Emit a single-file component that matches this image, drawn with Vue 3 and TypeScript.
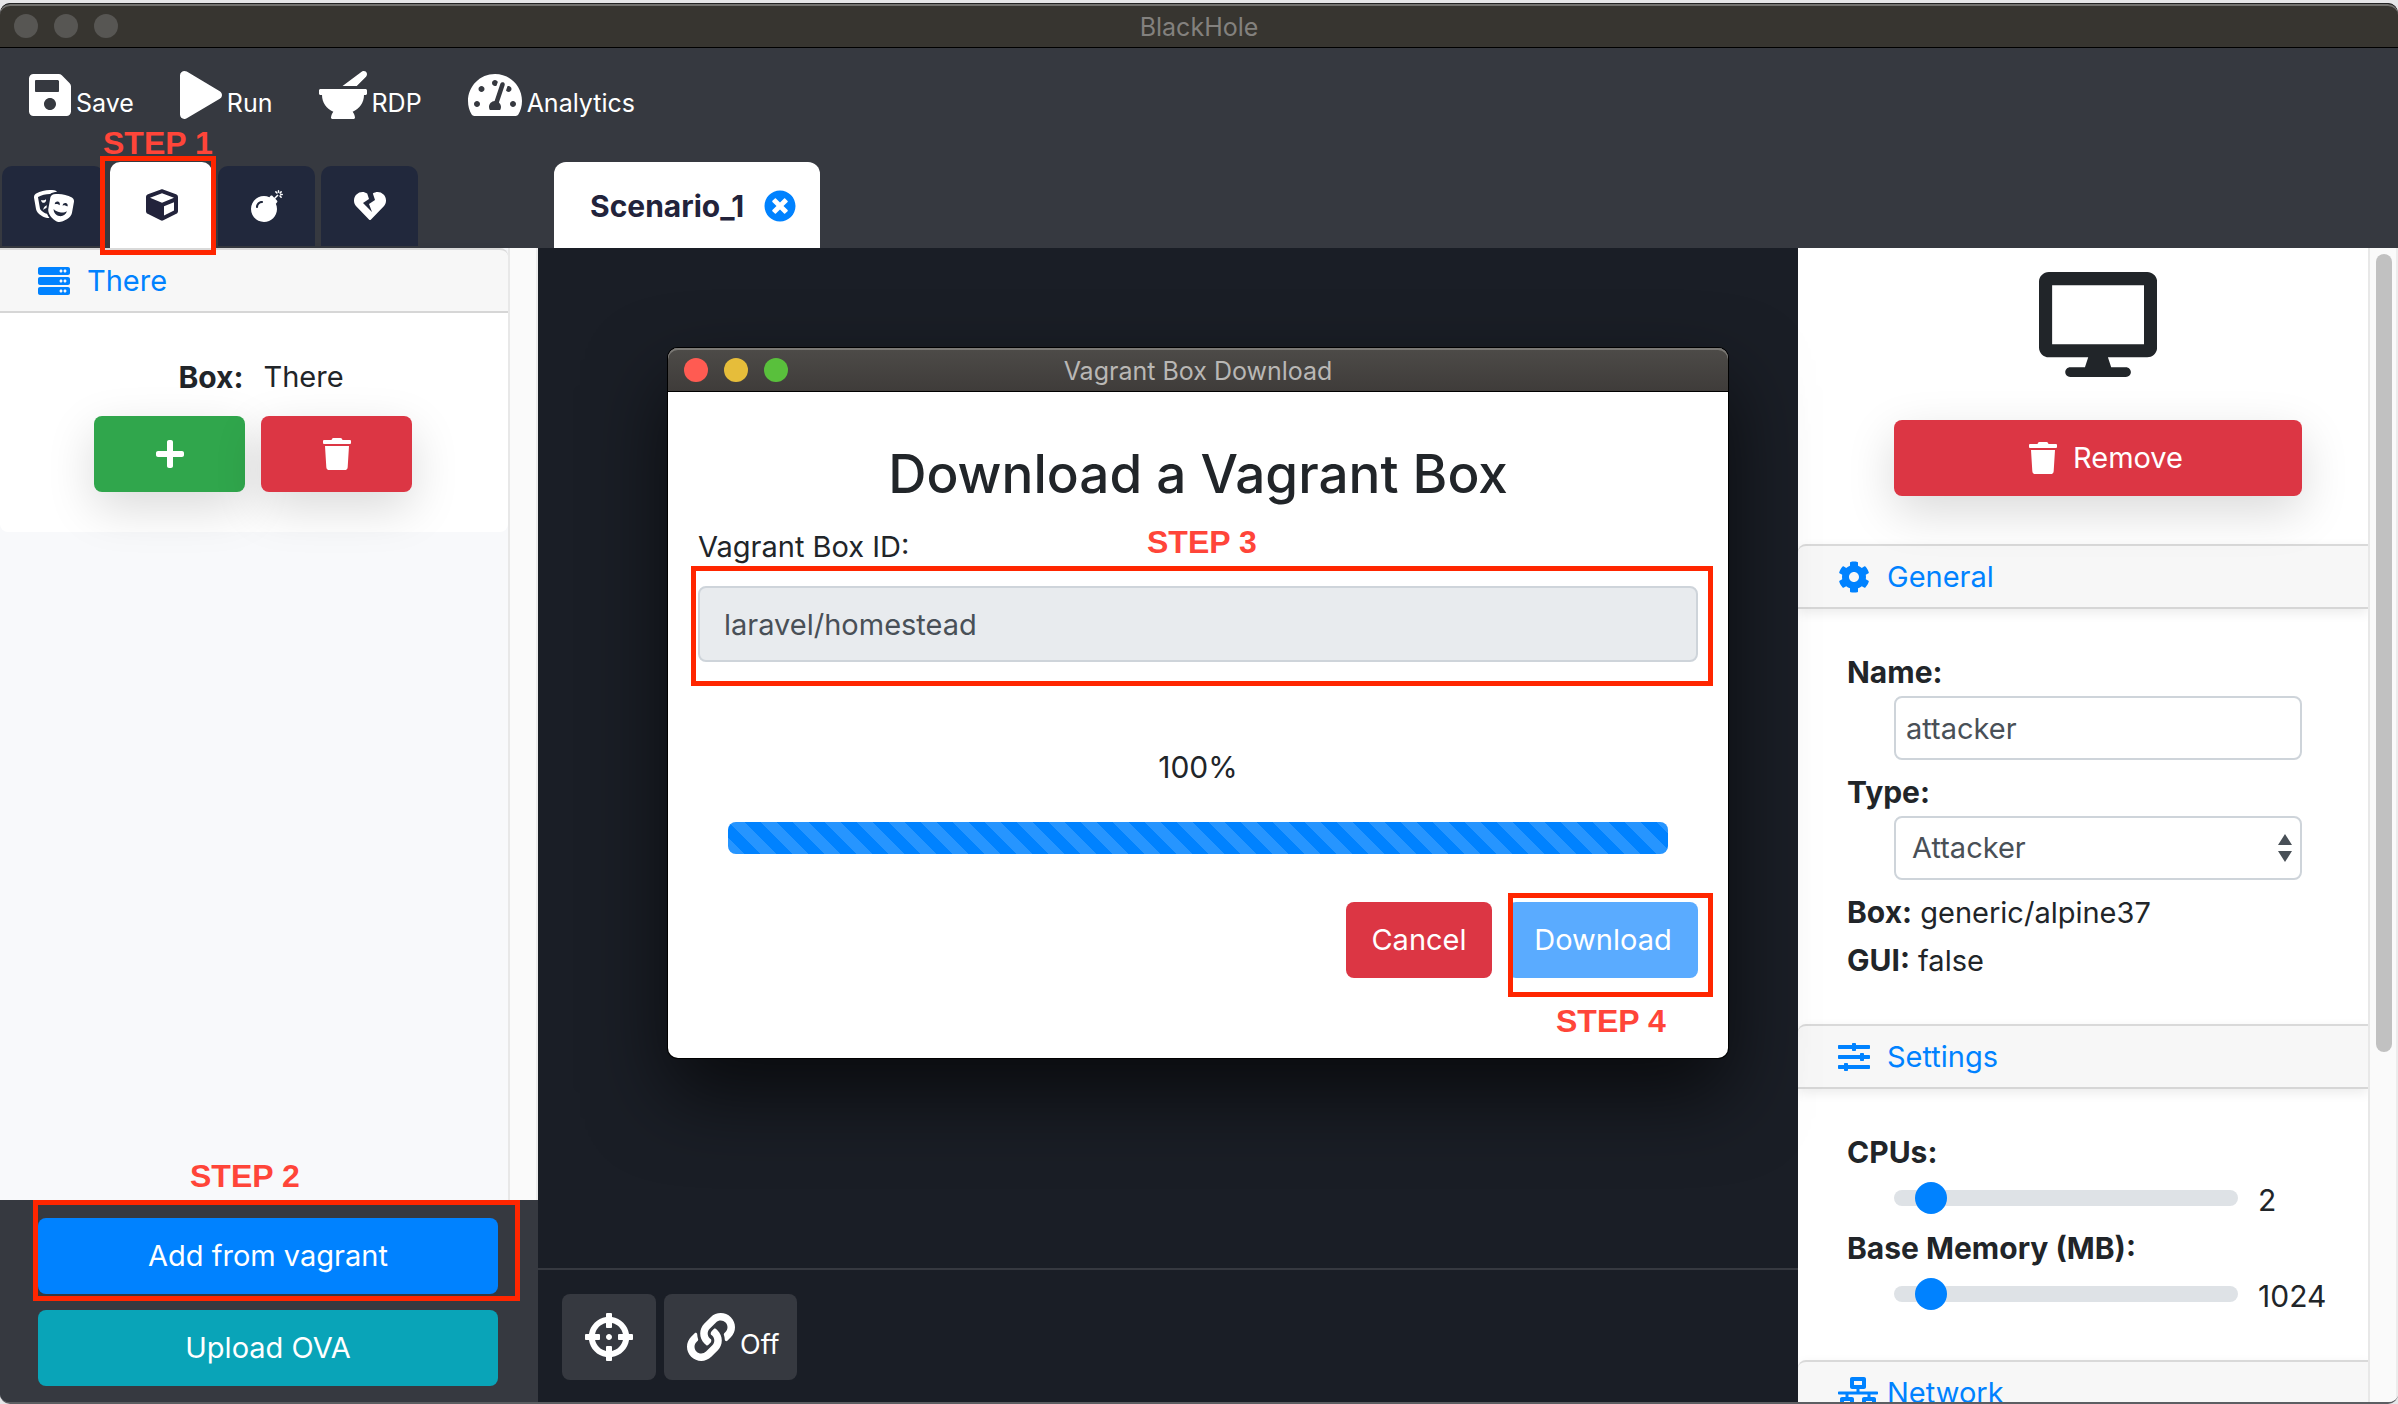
<script setup lang="ts">
import { ref } from 'vue'

interface Icon {
  w: number
  d: string
}

const icons: Record<string, Icon> = {
  save: { w: 448, d: 'M433.941 129.941l-83.882-83.882A48 48 0 0 0 316.118 32H48C21.49 32 0 53.49 0 80v352c0 26.51 21.49 48 48 48h352c26.51 0 48-21.49 48-48V163.882a48 48 0 0 0-14.059-33.941zM224 416c-35.346 0-64-28.654-64-64 0-35.346 28.654-64 64-64s64 28.654 64 64c0 35.346-28.654 64-64 64zm96-304.52V212c0 6.627-5.373 12-12 12H76c-6.627 0-12-5.373-12-12V108c0-6.627 5.373-12 12-12h228.52c3.183 0 6.235 1.264 8.485 3.515l3.48 3.48A11.996 11.996 0 0 1 320 111.48z' },
  play: { w: 448, d: 'M424.4 214.7L72.4 6.6C43.8-10.3 0 6.1 0 47.9V464c0 37.5 40.7 60.1 72.4 41.3l352-208c31.4-18.5 31.5-64.1 0-82.6z' },
  mortar: { w: 512, d: 'M501.54 60.91c17.22-17.22 12.51-46.25-9.27-57.14a35.696 35.696 0 0 0-37.37 3.37L251.09 160h151.37l99.08-99.09zM496 192H16c-8.84 0-16 7.16-16 16v32c0 8.84 7.16 16 16 16h16c0 80.98 50.2 150.11 121.13 178.32-12.76 16.87-21.72 36.8-24.95 58.69-1.46 9.92 6.04 18.98 16.07 18.98h223.5c10.03 0 17.53-9.06 16.07-18.98-3.22-21.89-12.18-41.82-24.95-58.69C429.8 406.11 480 336.98 480 256h16c8.84 0 16-7.16 16-16v-32c0-8.84-7.16-16-16-16z' },
  gauge: { w: 576, d: 'M288 32C128.94 32 0 160.94 0 320c0 52.8 14.25 102.26 39.06 144.8 5.61 9.62 16.3 15.2 27.44 15.2h443c11.14 0 21.83-5.58 27.44-15.2C561.75 422.26 576 372.8 576 320c0-159.06-128.94-288-288-288zm0 64c14.71 0 26.58 10.13 30.32 23.65-1.11 2.26-2.64 4.23-3.45 6.67l-9.22 27.67c-5.13 3.49-10.97 6.01-17.64 6.01-17.67 0-32-14.33-32-32S270.33 96 288 96zM96 384c-17.67 0-32-14.33-32-32s14.33-32 32-32 32 14.33 32 32-14.33 32-32 32zm48-160c-17.67 0-32-14.33-32-32s14.33-32 32-32 32 14.33 32 32-14.33 32-32 32zm246.77-72.41l-61.33 184C343.13 347.33 352 364.54 352 384c0 11.72-3.38 22.55-8.88 32H232.88c-5.5-9.45-8.88-20.28-8.88-32 0-33.94 26.5-61.43 59.9-63.59l61.34-184.01c4.17-12.56 17.73-19.45 30.36-15.17 12.57 4.19 19.35 17.79 15.17 30.36zm14.66 57.2l15.52-46.55c3.47-1.29 7.13-2.23 11.05-2.23 17.67 0 32 14.33 32 32s-14.33 32-32 32c-11.38-.01-20.89-6.28-26.57-15.22zM480 384c-17.67 0-32-14.33-32-32s14.33-32 32-32 32 14.33 32 32-14.33 32-32 32z' },
  masks: { w: 640, d: 'M206.86 245.15c-35.88 10.45-59.95 41.2-57.53 74.1 11.4-12.72 28.81-23.7 49.9-30.92l7.63-43.18zM95.81 295L64.08 115.49c-.29-1.62.28-2.62.24-2.65 57.76-32.06 123.12-49.01 189.01-49.01 1.61 0 3.23.17 4.85.19 13.95-13.47 31.73-22.83 51.59-26 18.89-3.02 38.05-4.55 57.18-5.32-9.99-13.95-24.48-24.23-41.77-27C301.27 1.89 277.24 0 253.32 0 176.66 0 101.02 19.42 33.2 57.06 9.03 70.48-3.92 98.48 1.05 126.58l31.73 179.51c14.23 80.52 136.33 142.08 204.45 142.08 3.59 0 6.75-.46 10.01-.8-13.52-17.08-28.94-40.48-39.5-67.58-47.61-12.98-106.06-51.62-111.93-84.79zm97.55-137.46c-.73-4.12-2.23-7.87-4.07-11.4-8.25 8.91-20.67 15.75-35.32 18.32-14.65 2.58-28.67.4-39.48-5.17-.52 3.94-.64 7.98.09 12.1 3.84 21.7 24.58 36.19 46.34 32.37 21.75-3.82 36.28-24.52 32.44-46.22zM606.8 120.9c-88.98-49.38-191.43-67.41-291.98-51.35-27.31 4.36-49.08 26.26-54.04 54.36l-31.73 179.51c-15.39 87.05 95.28 196.27 158.31 207.35 63.03 11.09 204.47-53.79 219.86-140.84l31.73-179.51c4.97-28.11-7.98-56.11-32.15-69.52zm-273.24 96.8c3.84-21.7 24.58-36.19 46.34-32.36 21.76 3.83 36.28 24.52 32.45 46.22-.73 4.12-2.23 7.87-4.07 11.4-8.25-8.91-20.67-15.75-35.32-18.32-14.65-2.58-28.67-.4-39.48 5.17-.53-3.95-.65-7.99.08-12.11zm70.47 198.76c-55.68-9.79-93.52-59.27-89.04-112.9 20.6 25.54 56.21 46.17 99.49 53.78 43.28 7.61 83.82.37 111.93-16.6-14.18 51.94-66.71 85.51-122.38 75.72zm130.3-151.34c-8.25-8.91-20.68-15.75-35.33-18.32-14.65-2.58-28.67-.4-39.48 5.17-.52-3.94-.64-7.98.09-12.1 3.84-21.7 24.58-36.19 46.34-32.37 21.75 3.83 36.28 24.52 32.45 46.22-.73 4.13-2.23 7.88-4.07 11.4z' },
  cube: { w: 512, d: 'M239.1 6.3l-208 78c-18.7 7-31.1 25-31.1 45v225.1c0 18.2 10.3 34.8 26.5 42.9l208 104c13.5 6.8 29.4 6.8 42.9 0l208-104c16.3-8.1 26.5-24.8 26.5-42.9V129.3c0-20-12.4-37.9-31.1-44.9l-208-78C262 2.2 250 2.2 239.1 6.3zM256 68.4l192 72v1.1l-192 78-192-78v-1.1l192-72zm32 356V275.5l160-65v133.9l-160 80z' },
  bomb: { w: 512, d: 'M440.5 88.5l-52 52L415 167c9.4 9.4 9.4 24.6 0 33.9l-17.4 17.4c11.8 26.1 18.4 55.1 18.4 85.6 0 114.9-93.1 208-208 208S0 418.9 0 304 93.1 96 208 96c30.5 0 59.5 6.6 85.6 18.4L311 97c9.4-9.4 24.6-9.4 33.9 0l26.5 26.5 52-52 17.1 17zM500 60h-24c-6.6 0-12 5.4-12 12s5.4 12 12 12h24c6.6 0 12-5.4 12-12s-5.4-12-12-12zM440 0c-6.6 0-12 5.4-12 12v24c0 6.6 5.4 12 12 12s12-5.4 12-12V12c0-6.6-5.4-12-12-12zm33.9 55l17-17c4.7-4.7 4.7-12.3 0-17-4.7-4.7-12.3-4.7-17 0l-17 17c-4.7 4.7-4.7 12.3 0 17 4.8 4.7 12.4 4.7 17 0zm-67.8 0c4.7 4.7 12.3 4.7 17 0 4.7-4.7 4.7-12.3 0-17l-17-17c-4.7-4.7-12.3-4.7-17 0-4.7 4.7-4.7 12.3 0 17l17 17zm67.8 34c-4.7-4.7-12.3-4.7-17 0-4.7 4.7-4.7 12.3 0 17l17 17c4.7 4.7 12.3 4.7 17 0 4.7-4.7 4.7-12.3 0-17l-17-17zM112 272c0-35.3 28.7-64 64-64 8.8 0 16-7.2 16-16s-7.2-16-16-16c-52.9 0-96 43.1-96 96 0 8.8 7.2 16 16 16s16-7.2 16-16z' },
  heart: { w: 512, d: 'M473.7 73.8l-2.4-2.5c-46-47-118-51.7-169.6-14.8L336 159.9l-96 64 48 128-144-144 96-64-28.6-86.5C159.7 19.6 87 24 40.7 71.4l-2.4 2.4C-10.4 123.6-12.5 202.9 31 256l212.1 218.6c7.1 7.3 18.6 7.3 25.7 0L481 255.9c43.5-53 41.4-132.3-7.3-182.1z' },
  close: { w: 512, d: 'M256 8C119 8 8 119 8 256s111 248 248 248 248-111 248-248S393 8 256 8zm121.6 313.1c4.7 4.7 4.7 12.3 0 17L338 377.6c-4.7 4.7-12.3 4.7-17 0L256 312l-65.1 65.6c-4.7 4.7-12.3 4.7-17 0L134.4 338c-4.7-4.7-4.7-12.3 0-17l65.6-65-65.6-65.1c-4.7-4.7-4.7-12.3 0-17l39.6-39.6c4.7-4.7 12.3-4.7 17 0l65 65.7 65.1-65.6c4.7-4.7 12.3-4.7 17 0l39.6 39.6c4.7 4.7 4.7 12.3 0 17L312 256l65.6 65.1z' },
  server: { w: 512, d: [0, 160, 320].map((y) => `M480 ${160 + y}H32c-17.673 0-32-14.327-32-32v-64c0-17.673 14.327-32 32-32h448c17.673 0 32 14.327 32 32v64c0 17.673-14.327 32-32 32zm-48-88c-13.255 0-24 10.745-24 24s10.745 24 24 24 24-10.745 24-24-10.745-24-24-24zm-64 0c-13.255 0-24 10.745-24 24s10.745 24 24 24 24-10.745 24-24-10.745-24-24-24z`).join('') },
  plus: { w: 448, d: 'M416 208H272V64c0-17.67-14.33-32-32-32h-32c-17.67 0-32 14.33-32 32v144H32c-17.67 0-32 14.33-32 32v32c0 17.67 14.33 32 32 32h144v144c0 17.67 14.33 32 32 32h32c17.67 0 32-14.33 32-32V304h144c17.67 0 32-14.33 32-32v-32c0-17.67-14.33-32-32-32z' },
  trash: { w: 448, d: 'M432 32H312l-9.4-18.7A24 24 0 0 0 281.1 0H166.8a23.72 23.72 0 0 0-21.4 13.3L136 32H16A16 16 0 0 0 0 48v32a16 16 0 0 0 16 16h416a16 16 0 0 0 16-16V48a16 16 0 0 0-16-16zM53.2 467a48 48 0 0 0 47.9 45h245.8a48 48 0 0 0 47.9-45L416 128H32z' },
  desktop: { w: 576, d: 'M528 0H48C21.5 0 0 21.5 0 48v320c0 26.5 21.5 48 48 48h192l-16 48h-72c-13.3 0-24 10.7-24 24s10.7 24 24 24h272c13.3 0 24-10.7 24-24s-10.7-24-24-24h-72l-16-48h192c26.5 0 48-21.5 48-48V48c0-26.5-21.5-48-48-48zm-16 352H64V64h448v288z' },
  cog: { w: 512, d: 'M487.4 315.7l-42.6-24.6c4.3-23.2 4.3-47 0-70.2l42.6-24.6c4.9-2.8 7.1-8.6 5.5-14-11.1-35.6-30-67.8-54.7-94.6-3.8-4.1-10-5.1-14.8-2.3L380.8 110c-17.9-15.4-38.5-27.3-60.8-35.1V25.8c0-5.6-3.9-10.5-9.4-11.7-36.7-8.2-74.3-7.8-109.2 0-5.5 1.2-9.4 6.1-9.4 11.7V75c-22.2 7.9-42.8 19.8-60.8 35.1L88.7 85.5c-4.9-2.8-11-1.9-14.8 2.3-24.7 26.7-43.6 58.9-54.7 94.6-1.7 5.4.6 11.2 5.5 14L67.3 221c-4.3 23.2-4.3 47 0 70.2l-42.6 24.6c-4.9 2.8-7.1 8.6-5.5 14 11.1 35.6 30 67.8 54.7 94.6 3.8 4.1 10 5.1 14.8 2.3l42.6-24.6c17.9 15.4 38.5 27.3 60.8 35.1v49.2c0 5.6 3.9 10.5 9.4 11.7 36.7 8.2 74.3 7.8 109.2 0 5.5-1.2 9.4-6.1 9.4-11.7v-49.2c22.2-7.9 42.8-19.8 60.8-35.1l42.6 24.6c4.9 2.8 11 1.9 14.8-2.3 24.7-26.7 43.6-58.9 54.7-94.6 1.5-5.5-.7-11.3-5.6-14.1zM256 336c-44.1 0-80-35.9-80-80s35.9-80 80-80 80 35.9 80 80-35.9 80-80 80z' },
  sliders: { w: 512, d: 'M496 384H160v-16c0-8.8-7.2-16-16-16h-32c-8.8 0-16 7.2-16 16v16H16c-8.8 0-16 7.2-16 16v32c0 8.8 7.2 16 16 16h80v16c0 8.8 7.2 16 16 16h32c8.8 0 16-7.2 16-16v-16h336c8.8 0 16-7.2 16-16v-32c0-8.8-7.2-16-16-16zm0-160h-80v-16c0-8.8-7.2-16-16-16h-32c-8.8 0-16 7.2-16 16v16H16c-8.8 0-16 7.2-16 16v32c0 8.8 7.2 16 16 16h336v16c0 8.8 7.2 16 16 16h32c8.8 0 16-7.2 16-16v-16h80c8.8 0 16-7.2 16-16v-32c0-8.8-7.2-16-16-16zm0-160H288V48c0-8.8-7.2-16-16-16h-32c-8.8 0-16 7.2-16 16v16H16C7.2 64 0 71.2 0 80v32c0 8.8 7.2 16 16 16h208v16c0 8.8 7.2 16 16 16h32c8.8 0 16-7.2 16-16v-16h208c8.8 0 16-7.2 16-16V80c0-8.8-7.2-16-16-16z' },
  network: { w: 640, d: 'M640 264v-16c0-8.84-7.16-16-16-16H344v-40h72c17.67 0 32-14.33 32-32V32c0-17.67-14.33-32-32-32H224c-17.67 0-32 14.33-32 32v128c0 17.67 14.33 32 32 32h72v40H16c-8.84 0-16 7.16-16 16v16c0 8.84 7.16 16 16 16h104v40H64c-17.67 0-32 14.33-32 32v128c0 17.67 14.33 32 32 32h160c17.67 0 32-14.33 32-32V352c0-17.67-14.33-32-32-32h-56v-40h304v40h-56c-17.67 0-32 14.33-32 32v128c0 17.67 14.33 32 32 32h160c17.67 0 32-14.33 32-32V352c0-17.67-14.33-32-32-32h-56v-40h104c8.84 0 16-7.16 16-16zM256 128V64h128v64H256zm-64 320H96v-64h96v64zm352 0h-96v-64h96v64z' },
  crosshairs: { w: 512, d: 'M500 224h-30.364C455.724 130.325 381.675 56.276 288 42.364V12c0-6.627-5.373-12-12-12h-40c-6.627 0-12 5.373-12 12v30.364C130.325 56.276 56.276 130.325 42.364 224H12c-6.627 0-12 5.373-12 12v40c0 6.627 5.373 12 12 12h30.364C56.276 381.675 130.325 455.724 224 469.636V500c0 6.627 5.373 12 12 12h40c6.627 0 12-5.373 12-12v-30.364C381.675 455.724 455.724 381.675 469.636 288H500c6.627 0 12-5.373 12-12v-40c0-6.627-5.373-12-12-12zM288 404.634V364c0-6.627-5.373-12-12-12h-40c-6.627 0-12 5.373-12 12v40.634C165.826 392.232 119.783 346.243 107.366 288H148c6.627 0 12-5.373 12-12v-40c0-6.627-5.373-12-12-12h-40.634C119.768 165.826 165.757 119.783 224 107.366V148c0 6.627 5.373 12 12 12h40c6.627 0 12-5.373 12-12v-40.634C346.174 119.768 392.217 165.757 404.634 224H364c-6.627 0-12 5.373-12 12v40c0 6.627 5.373 12 12 12h40.634C392.232 346.174 346.243 392.217 288 404.634zM288 256c0 17.673-14.327 32-32 32s-32-14.327-32-32c0-17.673 14.327-32 32-32s32 14.327 32 32z' },
  link: { w: 512, d: 'M326.612 185.391c59.747 59.809 58.927 155.698.36 214.59-.11.12-.24.25-.36.37l-67.2 67.2c-59.27 59.27-155.699 59.262-214.96 0-59.27-59.26-59.27-155.7 0-214.96l37.106-37.106c9.84-9.84 26.786-3.3 27.294 10.606.648 17.722 3.826 35.527 9.69 52.721 1.986 5.822.567 12.262-3.783 16.612l-13.087 13.087c-28.026 28.026-28.905 73.66-1.155 101.96 28.024 28.579 74.086 28.749 102.325.51l67.2-67.19c28.191-28.191 28.073-73.757 0-101.83-3.701-3.694-7.429-6.564-10.341-8.569a16.037 16.037 0 0 1-6.947-12.606c-.396-10.567 3.348-21.456 11.698-29.806l21.054-21.055c5.521-5.521 14.182-6.199 20.584-1.731a152.482 152.482 0 0 1 20.522 17.197zM467.547 44.449c-59.261-59.262-155.69-59.27-214.96 0l-67.2 67.2c-.12.12-.25.25-.36.37-58.566 58.892-59.387 154.781.36 214.59a152.454 152.454 0 0 0 20.521 17.196c6.402 4.468 15.064 3.789 20.584-1.731l21.054-21.055c8.35-8.35 12.094-19.239 11.698-29.806a16.037 16.037 0 0 0-6.947-12.606c-2.912-2.005-6.64-4.875-10.341-8.569-28.073-28.073-28.191-73.639 0-101.83l67.2-67.19c28.239-28.239 74.3-28.069 102.325.51 27.75 28.3 26.872 73.934-1.155 101.96l-13.087 13.087c-4.35 4.35-5.769 10.79-3.783 16.612 5.864 17.194 9.042 34.999 9.69 52.721.509 13.906 17.454 20.446 27.294 10.606l37.106-37.106c59.271-59.259 59.271-155.699.001-214.959z' },
}

const box = (name: string): string => `0 0 ${icons[name].w} 512`

const tools = [
  { icon: 'save', label: 'Save' },
  { icon: 'play', label: 'Run' },
  { icon: 'mortar', label: 'RDP' },
  { icon: 'gauge', label: 'Analytics' },
]

const libraryTabs = [
  { icon: 'masks', label: 'Roles' },
  { icon: 'cube', label: 'Boxes' },
  { icon: 'bomb', label: 'Attacks' },
  { icon: 'heart', label: 'Vulnerabilities' },
]
const activeTab = ref('cube')

const machineName = ref('attacker')
const machineType = ref('Attacker')
const cpus = ref(2)
const memory = ref(1024)
const boxId = ref('laravel/homestead')
const progress = ref(100)
</script>

<template>
  <div class="screen">
    <div class="window">
      <div class="titlebar main-bar">
        <div class="lights idle"><i></i><i></i><i></i></div>
        <span>BlackHole</span>
      </div>

      <header class="header">
        <nav class="toolbar">
          <button v-for="t in tools" :key="t.icon" type="button" class="tool">
            <svg class="i48" :viewBox="box(t.icon)"><path :d="icons[t.icon].d" /></svg>
            <span>{{ t.label }}</span>
          </button>
        </nav>
        <div class="tab-row">
          <div class="library-tabs">
            <button
              v-for="t in libraryTabs"
              :key="t.icon"
              type="button"
              class="tab"
              :class="[t.icon, { active: activeTab === t.icon }]"
              :aria-label="t.label"
              @click="activeTab = t.icon"
            >
              <svg class="i32" :viewBox="box(t.icon)"><path :d="icons[t.icon].d" /></svg>
              <span v-if="t.icon === 'cube'" class="mark mark-1"><b>STEP 1</b></span>
            </button>
          </div>
          <div class="scenario">
            <span>Scenario_1</span>
            <button type="button" class="close" aria-label="Close scenario">
              <svg class="i32" :viewBox="box('close')"><path :d="icons.close.d" /></svg>
            </button>
          </div>
        </div>
      </header>

      <main class="workspace">
        <aside class="library">
          <div class="library-scroll">
            <div class="library-list">
              <h2 class="section-head">
                <svg class="i32" :viewBox="box('server')"><path :d="icons.server.d" /></svg>
                <a href="#">There</a>
              </h2>
              <div class="box-card">
                <p class="box-line"><strong>Box:</strong><span>There</span></p>
                <div class="box-actions">
                  <button type="button" class="btn green raised" aria-label="Add box">
                    <svg class="i32" :viewBox="box('plus')"><path :d="icons.plus.d" /></svg>
                  </button>
                  <button type="button" class="btn red raised" aria-label="Delete box">
                    <svg class="i32" :viewBox="box('trash')"><path :d="icons.trash.d" /></svg>
                  </button>
                </div>
              </div>
            </div>
            <div class="gutter"></div>
          </div>
          <div class="library-foot">
            <button type="button" class="btn blue">
              Add from vagrant
              <span class="mark mark-2"><b>STEP 2</b></span>
            </button>
            <button type="button" class="btn teal">Upload OVA</button>
          </div>
        </aside>

        <section class="canvas">
          <div class="stage"></div>
          <div class="canvas-bar">
            <button type="button" class="canvas-btn" aria-label="Center view">
              <svg class="i48" :viewBox="box('crosshairs')"><path :d="icons.crosshairs.d" /></svg>
            </button>
            <button type="button" class="canvas-btn">
              <svg class="i48" :viewBox="box('link')"><path :d="icons.link.d" /></svg>
              <span>Off</span>
            </button>
          </div>
        </section>

        <aside class="details">
          <div class="details-list">
            <div class="machine">
              <svg class="desktop" :viewBox="box('desktop')"><path :d="icons.desktop.d" /></svg>
              <button type="button" class="btn red raised">
                <svg class="i32" :viewBox="box('trash')"><path :d="icons.trash.d" /></svg>
                Remove
              </button>
            </div>

            <h2 class="section-head">
              <svg class="i32" :viewBox="box('cog')"><path :d="icons.cog.d" /></svg>
              <a href="#">General</a>
            </h2>
            <div class="section-body">
              <label for="name">Name:</label>
              <input id="name" v-model="machineName" class="field" type="text" />
              <label for="type">Type:</label>
              <div class="select-wrap">
                <select id="type" v-model="machineType" class="field">
                  <option>Attacker</option>
                  <option>Victim</option>
                </select>
                <svg class="arrows" viewBox="0 0 14 28"><path d="M7 0l7 11H0zM7 28l7-11H0z" /></svg>
              </div>
              <p><strong>Box:</strong> generic/alpine37</p>
              <p><strong>GUI:</strong> false</p>
            </div>

            <h2 class="section-head">
              <svg class="i32" :viewBox="box('sliders')"><path :d="icons.sliders.d" /></svg>
              <a href="#">Settings</a>
            </h2>
            <div class="section-body">
              <label for="cpus">CPUs:</label>
              <div class="range-row">
                <input id="cpus" v-model.number="cpus" type="range" min="1" max="16" />
                <output for="cpus">{{ cpus }}</output>
              </div>
              <label for="memory">Base Memory (MB):</label>
              <div class="range-row">
                <input id="memory" v-model.number="memory" type="range" min="512" max="8192" step="512" />
                <output for="memory">{{ memory }}</output>
              </div>
            </div>

            <h2 class="section-head">
              <svg class="i32" :viewBox="box('network')"><path :d="icons.network.d" /></svg>
              <a href="#">Network</a>
            </h2>
          </div>
          <div class="scrollbar"><div class="thumb"></div></div>
        </aside>
      </main>
    </div>

    <div class="dialog" role="dialog" aria-labelledby="dialog-title">
      <div class="titlebar dialog-bar">
        <div class="lights"><i></i><i></i><i></i></div>
        <span>Vagrant Box Download</span>
      </div>
      <div class="dialog-body">
        <h1 id="dialog-title">Download a Vagrant Box</h1>
        <label for="box-id">Vagrant Box ID:</label>
        <div class="box-field">
          <input id="box-id" v-model="boxId" type="text" disabled />
          <span class="mark mark-3"><b>STEP 3</b></span>
        </div>
        <p class="percent">{{ progress }}%</p>
        <div class="track"><div class="bar" :style="{ width: progress + '%' }"></div></div>
        <div class="dialog-actions">
          <button type="button" class="btn red">Cancel</button>
          <button type="button" class="btn pale">
            Download
            <span class="mark mark-4"><b>STEP 4</b></span>
          </button>
        </div>
      </div>
    </div>
  </div>
</template>

<style>
body {
  margin: 0;
  background: #e6e6e8;
  overflow: hidden;
}
</style>

<style scoped>
* {
  box-sizing: border-box;
}

.screen {
  --left: 538px;
  --right: 600px;
  --ink: #212529;
  --slate: #363940;
  --night: #1a1e26;
  --blue: #0082ff;
  position: relative;
  height: 100vh;
  padding-top: 3px;
  font: 400 29px/48px Inter, "Liberation Sans", sans-serif;
  color: var(--ink);
}

button,
input,
select {
  font: inherit;
  color: inherit;
}

button {
  border: 0;
  padding: 0;
  background: none;
}

h1,
h2,
p {
  margin: 0;
  font-weight: 400;
}

svg {
  display: block;
  flex: none;
  fill: currentColor;
}

.i48 {
  height: 48px;
}

.i32 {
  height: 32px;
}

strong,
.section-body label {
  font-size: 30px;
  font-weight: 700;
}

.window {
  display: flex;
  flex-direction: column;
  height: 100%;
  border-radius: 10px;
  overflow: hidden;
  background: var(--slate);
  border-bottom: 2px solid #5c5e62;
}

/* Title bars */
.titlebar {
  position: relative;
  flex: none;
  display: flex;
  align-items: center;
  justify-content: center;
  font-size: 25px;
  border-bottom: 1px solid #000;
}

.titlebar span {
  padding-top: 2px;
}

.main-bar {
  height: 45px;
  color: #83817e;
  background: #373530;
  border-top: 1px solid #222;
  border-radius: 10px 10px 0 0;
  box-shadow: inset 0 2px #73726f;
}

.lights {
  position: absolute;
  left: 16px;
  display: flex;
  gap: 16px;
}

.main-bar .lights {
  left: 14px;
}

.lights i {
  width: 24px;
  height: 24px;
  border-radius: 50%;
  background: #ff5b52;
}

.lights i:nth-child(2) {
  background: #e6bd3a;
}

.lights i:nth-child(3) {
  background: #59c03c;
}

.lights.idle i {
  background: #575653;
}

/* Header */
.header {
  flex: none;
  height: 200px;
  display: flex;
  flex-direction: column;
  justify-content: space-between;
  color: #fff;
}

.toolbar {
  display: flex;
  gap: 46px;
  padding: 23px 29px 0;
  font-size: 25px;
  line-height: 32px;
}

.tool {
  display: flex;
  align-items: flex-end;
  gap: 5px;
  line-height: inherit;
}

.tab-row {
  display: flex;
  align-items: flex-end;
}

.library-tabs {
  width: var(--left);
  display: flex;
  align-items: flex-end;
  gap: 6px;
  padding-left: 2px;
}

.tab {
  position: relative;
  display: flex;
  align-items: center;
  justify-content: center;
  width: 97px;
  height: 80px;
  margin-bottom: 2px;
  border-radius: 10px 10px 0 0;
  background: #21283c;
}

.tab.masks,
.tab.cube {
  width: 102px;
  padding-left: 2px;
}

.tab.active {
  height: 86px;
  margin-bottom: 0;
  background: #fff;
  color: #22233b;
}

.scenario {
  display: flex;
  align-items: center;
  gap: 20px;
  height: 86px;
  margin-left: 16px;
  padding: 2px 24px 0 36px;
  border-radius: 12px 12px 0 0;
  background: #fff;
  color: #22233b;
  font-size: 30px;
  font-weight: 700;
}

.close {
  color: var(--blue);
}

/* Columns */
.workspace {
  flex: 1;
  min-height: 0;
  display: grid;
  grid-template-columns: var(--left) 1fr var(--right);
}

.section-head {
  display: grid;
  grid-template-columns: 49px 1fr;
  align-items: center;
  height: 65px;
  padding-left: 40px;
  font-size: 29px;
  color: var(--blue);
  background: #f7f7f7;
  border-top: 2px solid #d9d9d9;
  border-bottom: 2px solid #d6d6d6;
  border-radius: 8px 0 0 0;
  box-shadow: 0 4px 12px rgba(0, 0, 0, 0.08);
}

.section-head a {
  color: inherit;
  text-decoration: none;
}

/* Left column */
.library {
  display: flex;
  flex-direction: column;
  min-height: 0;
}

.library-scroll {
  flex: 1;
  display: flex;
  background: #f8f9fb;
}

.library-list {
  flex: 1;
}

.library .section-head {
  padding-left: 38px;
  border-radius: 0 8px 0 0;
}

.gutter {
  width: 30px;
  background: #fafafa;
  border-left: 2px solid #e8e8e8;
  border-right: 2px solid #ececec;
}

.box-card {
  padding: 40px 0;
  background: #fff;
  border-radius: 0 0 8px 8px;
}

.box-line {
  display: flex;
  justify-content: center;
  gap: 20px;
  padding-left: 14px;
}

.box-actions {
  display: flex;
  gap: 16px;
  margin: 15px 96px 0 94px;
}

.btn {
  position: relative;
  flex: 1;
  display: flex;
  align-items: center;
  justify-content: center;
  gap: 16px;
  height: 76px;
  border-radius: 8px;
  color: #fff;
}

.raised {
  box-shadow: 0 16px 48px rgba(0, 0, 0, 0.15);
}

.green {
  background: #30a64c;
}

.red {
  background: #dc3644;
}

.blue {
  background: var(--blue);
}

.teal {
  background: #09a4b8;
}

.pale {
  background: #5aabff;
}

.library-foot {
  display: flex;
  flex-direction: column;
  gap: 16px;
  padding: 18px 40px 16px 38px;
  background: var(--slate);
}

.library-foot .btn {
  flex: none;
}

/* Canvas */
.canvas {
  display: flex;
  flex-direction: column;
  background: var(--night);
}

.stage {
  flex: 1;
}

.canvas-bar {
  display: flex;
  gap: 8px;
  padding: 24px 24px 22px;
  border-top: 2px solid var(--slate);
}

.canvas-btn {
  display: flex;
  align-items: flex-end;
  gap: 5px;
  height: 86px;
  padding: 0 17px 19px 23px;
  border-radius: 8px;
  background: var(--slate);
  color: #fff;
  font-size: 27px;
  line-height: 32px;
}

.canvas-btn:first-child {
  padding-right: 23px;
}

/* Right column */
.details {
  display: flex;
  min-height: 0;
  overflow: hidden;
  background: #fff;
}

.details-list {
  flex: 1;
}

.machine {
  display: flex;
  flex-direction: column;
  align-items: center;
  gap: 43px;
  padding: 24px 66px 48px 96px;
}

.machine .btn {
  flex: none;
  width: 100%;
  padding-left: 16px;
}

.desktop {
  height: 105px;
}

.section-body {
  padding: 39px 66px 40px 49px;
}

.section-body label {
  display: block;
}

.section-body p {
  height: 48px;
}

.field {
  display: block;
  width: calc(100% - 47px);
  height: 64px;
  margin: 0 0 8px 47px;
  padding: 0 10px;
  border: 2px solid #ced4da;
  border-radius: 8px;
  background: #fff;
  color: #495057;
}

.select-wrap {
  position: relative;
}

select.field {
  appearance: none;
  padding: 0 16px;
}

.arrows {
  position: absolute;
  top: 18px;
  right: 10px;
  width: 14px;
  height: 28px;
  color: #495057;
}

.range-row {
  display: flex;
  align-items: center;
  gap: 20px;
  height: 48px;
  margin: 0 -66px 0 47px;
}

.range-row input {
  flex: 1;
  min-width: 0;
  height: 32px;
  margin: 0 0 4px;
  appearance: none;
  background: none;
}

.range-row input::-webkit-slider-runnable-track {
  height: 16px;
  border-radius: 8px;
  background: #dee2e6;
}

.range-row input::-webkit-slider-thumb {
  appearance: none;
  width: 32px;
  height: 32px;
  margin-top: -8px;
  border-radius: 50%;
  background: var(--blue);
}

.range-row output {
  width: 110px;
  font-size: 30px;
}

.scrollbar {
  width: 30px;
  padding: 6px 4px 0 6px;
  border-left: 2px solid #e8e8e8;
  border-right: 2px solid #ececec;
  background: #fafafa;
}

.thumb {
  width: 16px;
  height: 69.5%;
  border-radius: 8px;
  background: #c1c1c1;
}

/* Download dialog */
.dialog {
  position: absolute;
  top: 348px;
  left: 50%;
  width: 1060px;
  margin-left: -531px;
  border-radius: 10px;
  background: #fff;
  box-shadow: 0 0 0 1px #000, 0 36px 80px rgba(0, 0, 0, 0.65);
}

.dialog-bar {
  height: 44px;
  color: #b9b7b5;
  background: linear-gradient(#4d4b48, #3f3c3a);
  border-radius: 10px 10px 0 0;
  box-shadow: inset 0 2px #7b7975;
}

.dialog-body {
  padding: 48px 30px 80px;
}

.dialog h1 {
  font-size: 53px;
  line-height: 68px;
  font-weight: 500;
  text-align: center;
}

.dialog label {
  display: block;
  margin: 15px 0;
}

.box-field {
  position: relative;
}

.box-field input {
  display: block;
  width: 100%;
  height: 76px;
  padding: 0 24px;
  border: 2px solid #ced4da;
  border-radius: 8px;
  background: #e8ebee;
  color: #495057;
}

.percent {
  margin: 81px 0 31px;
  font-size: 30px;
  text-align: center;
}

.track {
  height: 32px;
  margin: 0 30px;
  border-radius: 8px;
  overflow: hidden;
  background: #e9ecef;
}

.bar {
  height: 100%;
  background: var(--blue) linear-gradient(45deg, rgba(255, 255, 255, 0.15) 25%, transparent 25%, transparent 50%, rgba(255, 255, 255, 0.15) 50%, rgba(255, 255, 255, 0.15) 75%, transparent 75%) 0 0 / 32px 32px;
}

.dialog-actions {
  display: flex;
  justify-content: flex-end;
  gap: 16px;
  margin-top: 48px;
}

.dialog-actions .btn {
  flex: none;
  width: 146px;
}

.dialog-actions .btn.pale {
  width: 190px;
}

/* Step callouts laid over the controls they point at */
.mark {
  position: absolute;
  border: 5px solid #ff2600;
  pointer-events: none;
  z-index: 1;
}

.mark b {
  position: absolute;
  font: 700 32px/32px "Liberation Sans", Arial, sans-serif;
  color: #ff4539;
  white-space: nowrap;
}

.mark-1 {
  inset: -6px -4px -7px -10px;
}

.mark-1 b {
  left: -2px;
  top: -34px;
}

.mark-2 {
  inset: -18px -22px -7px -5px;
}

.mark-2 b {
  left: 152px;
  top: -45px;
}

.mark-3 {
  inset: -20px -15px -24px -7px;
}

.mark-3 b {
  left: 451px;
  top: -45px;
}

.mark-4 {
  inset: -9px -15px -19px 0;
}

.mark-4 b {
  left: 43px;
  top: 107px;
}
</style>
